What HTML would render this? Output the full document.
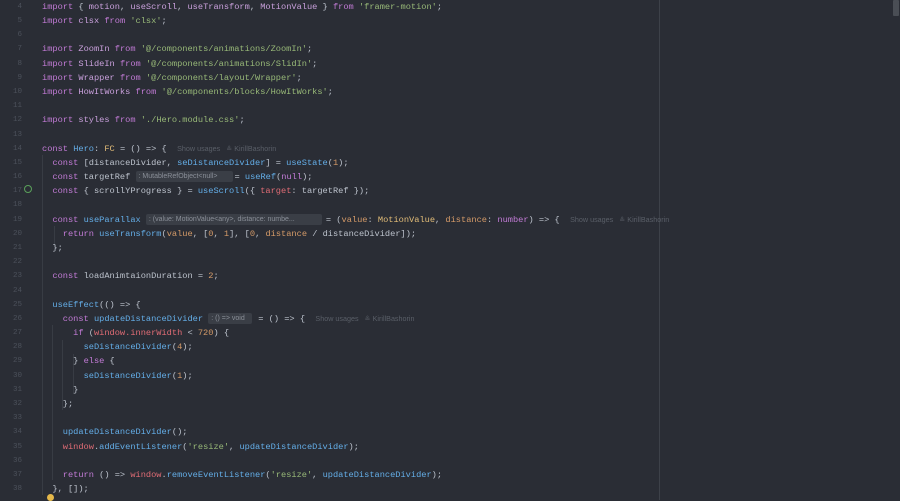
<!DOCTYPE html>
<html><head><meta charset="utf-8"><style>
html,body{margin:0;padding:0;width:900px;height:500px;overflow:hidden;background:#2a2d35;}
.r{position:absolute;left:42px;height:14.18px;line-height:14.18px;font-family:"Liberation Mono",monospace;font-size:8.67px;color:#bcc2cc;white-space:pre;}
.n{position:absolute;left:0;width:22px;text-align:right;height:14.18px;line-height:14.18px;font-family:"Liberation Mono",monospace;font-size:7.5px;color:#4c515b;}
.k{color:#c27bd6}.i{color:#c9a0dc}.s{color:#98b978}.f{color:#64aee8}.y{color:#e3bd78}.o{color:#d49a68}.red{color:#e06c75}
.h{display:inline-block;background:#3a3e46;color:#8a8f98;font-family:"Liberation Sans",sans-serif;font-size:7px;line-height:11px;height:11px;border-radius:2px;vertical-align:1px;padding:0 3px;box-sizing:border-box;margin-right:2px;}
.u{font-family:"Liberation Sans",sans-serif;font-size:7.2px;color:#5a5f68;}
.g{position:absolute;width:1px;background:#383c44;}
</style></head><body>
<div class="g" style="left:42px;top:155px;height:340px"></div>
<div class="g" style="left:52px;top:325px;height:155px"></div>
<div class="g" style="left:62px;top:340px;height:70px"></div>
<div class="g" style="left:73px;top:354px;height:40px"></div>
<div class="g" style="left:54px;top:226px;height:22px"></div>
<div style="position:absolute;left:659px;top:0;width:1px;height:500px;background:#3d4149"></div>
<div style="position:absolute;left:893px;top:0;width:6px;height:16px;background:#4a4e55;border-radius:1px"></div>
<div style="position:absolute;left:47px;top:494px;width:7px;height:7px;border-radius:50%;background:#e5b84a"></div>
<div style="position:absolute;left:24px;top:185px;width:6px;height:6px;border:1.3px solid #5aa05a;border-radius:50%"></div>

<div class="n" style="top:-0.1px">4</div><div class="n" style="top:14.1px">5</div><div class="n" style="top:28.3px">6</div><div class="n" style="top:42.4px">7</div><div class="n" style="top:56.6px">8</div><div class="n" style="top:70.8px">9</div><div class="n" style="top:85px">10</div><div class="n" style="top:99.2px">11</div><div class="n" style="top:113.3px">12</div><div class="n" style="top:127.5px">13</div><div class="n" style="top:141.7px">14</div><div class="n" style="top:155.9px">15</div><div class="n" style="top:170.1px">16</div><div class="n" style="top:184.2px">17</div><div class="n" style="top:198.4px">18</div><div class="n" style="top:212.6px">19</div><div class="n" style="top:226.8px">20</div><div class="n" style="top:241px">21</div><div class="n" style="top:255.1px">22</div><div class="n" style="top:269.3px">23</div><div class="n" style="top:283.5px">24</div><div class="n" style="top:297.7px">25</div><div class="n" style="top:311.9px">26</div><div class="n" style="top:326px">27</div><div class="n" style="top:340.2px">28</div><div class="n" style="top:354.4px">29</div><div class="n" style="top:368.6px">30</div><div class="n" style="top:382.8px">31</div><div class="n" style="top:396.9px">32</div><div class="n" style="top:411.1px">33</div><div class="n" style="top:425.3px">34</div><div class="n" style="top:439.5px">35</div><div class="n" style="top:453.7px">36</div><div class="n" style="top:467.8px">37</div><div class="n" style="top:482px">38</div>

<div class="r" style="top:-0.1px"><span class="k">import</span> { <span class="i">motion</span>, <span class="i">useScroll</span>, <span class="i">useTransform</span>, <span class="i">MotionValue</span> } <span class="k">from</span> <span class="s">'framer-motion'</span>;</div>
<div class="r" style="top:14.1px"><span class="k">import</span> <span class="i">clsx</span> <span class="k">from</span> <span class="s">'clsx'</span>;</div>
<div class="r" style="top:42.4px"><span class="k">import</span> <span class="i">ZoomIn</span> <span class="k">from</span> <span class="s">'@/components/animations/ZoomIn'</span>;</div>
<div class="r" style="top:56.6px"><span class="k">import</span> <span class="i">SlideIn</span> <span class="k">from</span> <span class="s">'@/components/animations/SlidIn'</span>;</div>
<div class="r" style="top:70.8px"><span class="k">import</span> <span class="i">Wrapper</span> <span class="k">from</span> <span class="s">'@/components/layout/Wrapper'</span>;</div>
<div class="r" style="top:85px"><span class="k">import</span> <span class="i">HowItWorks</span> <span class="k">from</span> <span class="s">'@/components/blocks/HowItWorks'</span>;</div>
<div class="r" style="top:113.3px"><span class="k">import</span> <span class="i">styles</span> <span class="k">from</span> <span class="s">'./Hero.module.css'</span>;</div>
<div class="r" style="top:141.7px"><span class="k">const</span> <span class="f">Hero</span>: <span class="y">FC</span> = () =&gt; {  <span class="u">Show usages &nbsp;&nbsp;≗ KirillBashorin</span></div>
<div class="r" style="top:155.9px">  <span class="k">const</span> [distanceDivider, <span class="f">seDistanceDivider</span>] = <span class="f">useState</span>(<span class="o">1</span>);</div>
<div class="r" style="top:170.1px">  <span class="k">const</span> targetRef <span class="h" style="width:97px">: MutableRefObject&lt;null&gt;</span>= <span class="f">useRef</span>(<span class="k">null</span>);</div>
<div class="r" style="top:184.2px">  <span class="k">const</span> { scrollYProgress } = <span class="f">useScroll</span>({ <span class="red">target</span>: targetRef });</div>
<div class="r" style="top:212.6px">  <span class="k">const</span> <span class="f">useParallax</span> <span class="h" style="width:176px;margin-right:4px">: (value: MotionValue&lt;any&gt;, distance: numbe...</span>= (<span class="o">value</span>: <span class="y">MotionValue</span>, <span class="o">distance</span>: <span class="k">number</span>) =&gt; {  <span class="u">Show usages &nbsp;&nbsp;≗ KirillBashorin</span></div>
<div class="r" style="top:226.8px">    <span class="k">return</span> <span class="f">useTransform</span>(<span class="o">value</span>, [<span class="o">0</span>, <span class="o">1</span>], [<span class="o">0</span>, <span class="o">distance</span> / distanceDivider]);</div>
<div class="r" style="top:241px">  };</div>
<div class="r" style="top:269.3px">  <span class="k">const</span> loadAnimtaionDuration = <span class="o">2</span>;</div>
<div class="r" style="top:297.7px">  <span class="f">useEffect</span>(() =&gt; {</div>
<div class="r" style="top:311.9px">    <span class="k">const</span> <span class="f">updateDistanceDivider</span> <span class="h" style="width:44px;margin-right:6px">: () =&gt; void</span>= () =&gt; {  <span class="u">Show usages &nbsp;&nbsp;≗ KirillBashorin</span></div>
<div class="r" style="top:326px">      <span class="k">if</span> (<span class="red">window.innerWidth</span> &lt; <span class="o">720</span>) {</div>
<div class="r" style="top:340.2px">        <span class="f">seDistanceDivider</span>(<span class="o">4</span>);</div>
<div class="r" style="top:354.4px">      } <span class="k">else</span> {</div>
<div class="r" style="top:368.6px">        <span class="f">seDistanceDivider</span>(<span class="o">1</span>);</div>
<div class="r" style="top:382.8px">      }</div>
<div class="r" style="top:396.9px">    };</div>
<div class="r" style="top:425.3px">    <span class="f">updateDistanceDivider</span>();</div>
<div class="r" style="top:439.5px">    <span class="red">window</span>.<span class="f">addEventListener</span>(<span class="s">'resize'</span>, <span class="f">updateDistanceDivider</span>);</div>
<div class="r" style="top:467.8px">    <span class="k">return</span> () =&gt; <span class="red">window</span>.<span class="f">removeEventListener</span>(<span class="s">'resize'</span>, <span class="f">updateDistanceDivider</span>);</div>
<div class="r" style="top:482px">  }, []);</div>
</body></html>
